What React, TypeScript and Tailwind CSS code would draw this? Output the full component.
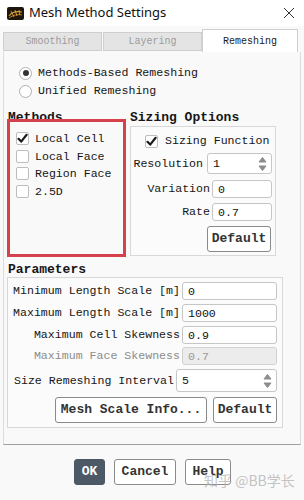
import type { ReactNode } from "react";

const MONO = "font-['Liberation_Mono','DejaVu_Sans_Mono',monospace]";

function Check({ checked }: { checked?: boolean }) {
  return (
    <span className="flex h-[13px] w-[13px] shrink-0 items-center justify-center rounded-[2px] border border-[#bdbdbd] bg-white">
      {checked && (
        <svg width="11" height="11" viewBox="0 0 11 11">
          <path d="M1.5 5.8 L4.2 8.6 L9.6 1.8" fill="none" stroke="#1b1b1b" strokeWidth="2.2" strokeLinecap="round" strokeLinejoin="round" />
        </svg>
      )}
    </span>
  );
}

function Radio({ checked }: { checked?: boolean }) {
  return (
    <span className="flex h-[13px] w-[13px] shrink-0 items-center justify-center rounded-full border border-[#b0b0b0] bg-white">
      {checked && <span className="h-[6px] w-[6px] rounded-full bg-[#333]" />}
    </span>
  );
}

function Spin() {
  return (
    <svg width="9" height="16" viewBox="0 0 9 16" className="shrink-0">
      <path d="M4.5 1.5 L8 6 L1 6 Z" fill="#8c8c8c" stroke="#8c8c8c" strokeWidth="1" strokeLinejoin="round" />
      <path d="M4.5 14.5 L8 10 L1 10 Z" fill="#8c8c8c" stroke="#8c8c8c" strokeWidth="1" strokeLinejoin="round" />
    </svg>
  );
}

function Field({ value, w, h = 18, spin, disabled }: { value: string; w: number; h?: number; spin?: boolean; disabled?: boolean }) {
  return (
    <div
      className={`flex shrink-0 items-center justify-between rounded-[3px] border pl-[5px] pr-[4px] ${
        disabled ? "border-[#d0d0d0] bg-[#ececec] text-[#9a9a9a]" : "border-[#c6c6c6] bg-white text-[#111]"
      }`}
      style={{ width: w, height: h }}
    >
      <span className="pt-[1px]">{value}</span>
      {spin && <Spin />}
    </div>
  );
}

function Btn({ children, w, dark }: { children: ReactNode; w: number; dark?: boolean }) {
  return (
    <div
      className={`flex h-[26px] items-center justify-center rounded-[3px] border text-[13px] font-bold ${
        dark ? "border-[#4b5765] bg-[#4d5967] text-white" : "border-[#8a8a8a] bg-white text-[#333]"
      }`}
      style={{ width: w }}
    >
      {children}
    </div>
  );
}

export default function App() {
  return (
    <div className={`relative flex h-[500px] w-[304px] flex-col overflow-hidden bg-[#f9f9f9] text-[11.6px] text-[#161616] ${MONO}`}>
      {/* title bar */}
      <div className="flex h-[26px] shrink-0 items-center bg-white pl-[7px] pr-[9px]">
        <svg width="17" height="13" viewBox="0 0 17 13" className="shrink-0">
          <rect x="0" y="0" width="17" height="13" rx="2" fill="#1e150c" />
          <path d="M2 9 C5 5 10 4 15 5" fill="none" stroke="#d89a2c" strokeWidth="1.2" />
          <path d="M2 11 C6 8 11 7 15 8" fill="none" stroke="#c57d1c" strokeWidth="1" />
          <path d="M4 4 L7 10 M8 3 L10 9 M12 3 L13 8" fill="none" stroke="#e7b54a" strokeWidth="0.8" />
        </svg>
        <span className="ml-[5px] font-['Noto_Sans',sans-serif] text-[13px] text-[#111]">Mesh Method Settings</span>
        <svg width="12" height="12" viewBox="0 0 12 12" className="ml-auto">
          <path d="M1 1 L11 11 M11 1 L1 11" stroke="#333" strokeWidth="1" />
        </svg>
      </div>

      {/* tabs */}
      <div className="flex h-[26px] shrink-0 items-end pl-[3px] text-[10px]">
        <div className="mb-[1px] flex h-[19px] w-[99px] items-center justify-center border border-[#cfcfcf] bg-[#e4e4e4] text-[#9b9b9b]">Smoothing</div>
        <div className="mb-[1px] ml-[1px] flex h-[19px] w-[99px] items-center justify-center border border-[#cfcfcf] bg-[#e4e4e4] text-[#9b9b9b]">Layering</div>
        <div className="flex h-[23px] w-[96px] items-center justify-center border border-b-0 border-[#cfcfcf] bg-white text-[#222]">Remeshing</div>
      </div>

      {/* panel */}
      <div className="mx-[3px] flex h-[393px] shrink-0 flex-col border border-t-0 border-[#dcdcdc] border-b-[#9f9f9f] pl-[3px] pt-[12px]">
        <div className="flex h-[18px] items-center gap-[6px] pl-[12px]">
          <Radio checked />
          <span>Methods-Based Remeshing</span>
        </div>
        <div className="flex h-[18px] items-center gap-[6px] pl-[12px]">
          <Radio />
          <span>Unified Remeshing</span>
        </div>

        <div className="mt-[11px] flex">
          {/* methods */}
          <div className="flex w-[119px] flex-col">
            <div className="h-[14px] pl-[1px] text-[13px] font-bold leading-[14px]">Methods</div>
            <div className="relative z-10 -mt-[6px] flex h-[138px] flex-col border-[3px] border-[#d6424b] pl-[6px] pt-[8px]">
              {[
                ["Local Cell", true],
                ["Local Face", false],
                ["Region Face", false],
                ["2.5D", false],
              ].map(([label, on]) => (
                <div key={label as string} className="flex h-[17.5px] items-center gap-[6px]">
                  <Check checked={on as boolean} />
                  <span>{label}</span>
                </div>
              ))}
            </div>
          </div>

          {/* sizing options */}
          <div className="ml-[4px] flex w-[146px] flex-col">
            <div className="h-[15px] text-[13px] font-bold leading-[14px]">Sizing Options</div>
            <div className="flex h-[130px] flex-col border border-[#d8d8d8] bg-[#fbfbfb] pr-[3px] pt-[5px]">
              <div className="flex h-[18px] items-center gap-[7px] pl-[14px]">
                <Check checked />
                <span>Sizing Function</span>
              </div>
              <div className="mt-[3px] flex items-center justify-end gap-[4px]">
                <span>Resolution</span>
                <Field value="1" w={65} h={21} spin />
              </div>
              <div className="mt-[6px] flex items-center justify-end gap-[2px]">
                <span>Variation</span>
                <Field value="0" w={60} h={18} />
              </div>
              <div className="mt-[5px] flex items-center justify-end gap-[2px]">
                <span>Rate</span>
                <Field value="0.7" w={60} h={18} />
              </div>
              <div className="mt-[5px] flex justify-end pr-[1px]">
                <Btn w={64}>Default</Btn>
              </div>
            </div>
          </div>
        </div>

        {/* parameters */}
        <div className="mt-[6px] h-[14px] pl-[1px] text-[13px] font-bold leading-[14px]">Parameters</div>
        <div className="flex h-[151px] w-[276px] flex-col border border-[#d8d8d8] bg-[#fbfbfb] pr-[5px] pt-[4px]">
          <div className="flex items-center justify-end gap-[2px]">
            <span>Minimum Length Scale [m]</span>
            <Field value="0" w={95} />
          </div>
          <div className="mt-[4px] flex items-center justify-end gap-[2px]">
            <span>Maximum Length Scale [m]</span>
            <Field value="1000" w={95} />
          </div>
          <div className="mt-[4px] flex items-center justify-end gap-[2px]">
            <span>Maximum Cell Skewness</span>
            <Field value="0.9" w={95} />
          </div>
          <div className="mt-[3px] flex items-center justify-end gap-[2px]">
            <span className="text-[#8c8c8c]">Maximum Face Skewness</span>
            <Field value="0.7" w={95} disabled />
          </div>
          <div className="mt-[4px] flex items-center justify-end gap-[2px]">
            <span>Size Remeshing Interval</span>
            <Field value="5" w={101} h={23} spin />
          </div>
          <div className="mt-[5px] flex justify-end gap-[6px]">
            <Btn w={152}>Mesh Scale Info...</Btn>
            <Btn w={64}>Default</Btn>
          </div>
        </div>
      </div>

      {/* dialog buttons */}
      <div className="mt-[14px] flex justify-center gap-[9px] pl-[1px]">
        <Btn w={31} dark>OK</Btn>
        <Btn w={62}>Cancel</Btn>
        <Btn w={46}>Help</Btn>
      </div>

      <div className="absolute left-[204px] top-[470px] font-['Noto_Sans_CJK_SC',sans-serif] text-[14px] text-[#b4b4b4]/80">
        知乎 @BB学长
      </div>
    </div>
  );
}
